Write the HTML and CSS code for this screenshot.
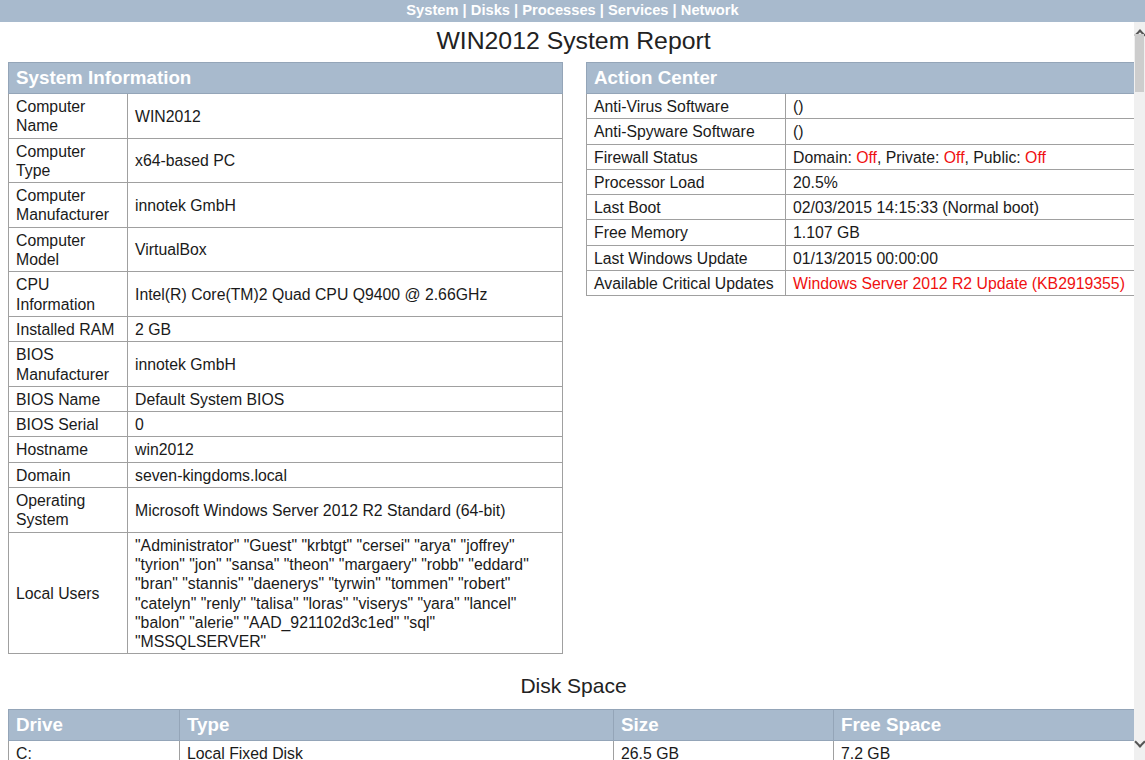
FILE: index.html
```html
<!DOCTYPE html>
<html>
<head>
<meta charset="utf-8">
<title>WIN2012 System Report</title>
<link rel="stylesheet" href="styles.css">
</head>
<body>
<nav class="topnav">
  <a href="#">System</a> | <a href="#">Disks</a> | <a href="#">Processes</a> | <a href="#">Services</a> | <a href="#">Network</a>
</nav>
<main class="page">
  <h1 class="title">WIN2012 System Report</h1>
  <div class="columns">
    <table class="grid sysinfo">
      <thead><tr><th colspan="2">System Information</th></tr></thead>
      <tbody>
        <tr><td class="label">Computer Name</td><td>WIN2012</td></tr>
        <tr><td class="label">Computer Type</td><td>x64-based PC</td></tr>
        <tr><td class="label">Computer Manufacturer</td><td>innotek GmbH</td></tr>
        <tr><td class="label">Computer Model</td><td>VirtualBox</td></tr>
        <tr><td class="label">CPU Information</td><td>Intel(R) Core(TM)2 Quad CPU Q9400 @ 2.66GHz</td></tr>
        <tr><td class="label">Installed RAM</td><td>2 GB</td></tr>
        <tr><td class="label">BIOS Manufacturer</td><td>innotek GmbH</td></tr>
        <tr><td class="label">BIOS Name</td><td>Default System BIOS</td></tr>
        <tr><td class="label">BIOS Serial</td><td>0</td></tr>
        <tr><td class="label">Hostname</td><td>win2012</td></tr>
        <tr><td class="label">Domain</td><td>seven-kingdoms.local</td></tr>
        <tr><td class="label">Operating System</td><td>Microsoft Windows Server 2012 R2 Standard (64-bit)</td></tr>
        <tr><td class="label">Local Users</td><td>"Administrator" "Guest" "krbtgt" "cersei" "arya" "joffrey" "tyrion" "jon" "sansa" "theon" "margaery" "robb" "eddard" "bran" "stannis" "daenerys" "tyrwin" "tommen" "robert" "catelyn" "renly" "talisa" "loras" "viserys" "yara" "lancel" "balon" "alerie" "AAD_921102d3c1ed" "sql" "MSSQLSERVER"</td></tr>
      </tbody>
    </table>
    <table class="grid action">
      <thead><tr><th colspan="2">Action Center</th></tr></thead>
      <tbody>
        <tr><td class="label">Anti-Virus Software</td><td>()</td></tr>
        <tr><td class="label">Anti-Spyware Software</td><td>()</td></tr>
        <tr><td class="label">Firewall Status</td><td>Domain: <span class="bad">Off</span>, Private: <span class="bad">Off</span>, Public: <span class="bad">Off</span></td></tr>
        <tr><td class="label">Processor Load</td><td>20.5%</td></tr>
        <tr><td class="label">Last Boot</td><td>02/03/2015 14:15:33 (Normal boot)</td></tr>
        <tr><td class="label">Free Memory</td><td>1.107 GB</td></tr>
        <tr><td class="label">Last Windows Update</td><td>01/13/2015 00:00:00</td></tr>
        <tr><td class="label">Available Critical Updates</td><td><span class="bad">Windows Server 2012 R2 Update (KB2919355)</span></td></tr>
      </tbody>
    </table>
  </div>
  <h2 class="section-title">Disk Space</h2>
  <table class="grid disk">
    <thead><tr><th class="c-drive">Drive</th><th class="c-type">Type</th><th class="c-size">Size</th><th>Free Space</th></tr></thead>
    <tbody>
      <tr><td>C:</td><td>Local Fixed Disk</td><td>26.5 GB</td><td>7.2 GB</td></tr>
    </tbody>
  </table>
</main>
<div class="scrollbar">
  <span class="sb-up"></span>
  <span class="sb-thumb"></span>
  <span class="sb-down"></span>
</div>
</body>
</html>
```

FILE: styles.css
```css
html, body {
  margin: 0;
  padding: 0;
  background: #fff;
  overflow: hidden;
}
body {
  font-family: "Liberation Sans", Arial, sans-serif;
  color: #1a1a1a;
  font-size: 15.8px;
}
.topnav {
  height: 22px;
  line-height: 21px;
  background: #a8bacd;
  color: #fff;
  text-align: center;
  font-weight: bold;
  font-size: 14.7px;
}
.topnav a {
  color: #fff;
  text-decoration: none;
}
.page {
  padding: 0 6px 0 8px;
}
.title {
  margin: 2px 0 4px;
  font-weight: normal;
  font-size: 24.8px;
  line-height: 34px;
  text-align: center;
  color: #222;
}
.columns {
  display: grid;
  grid-template-columns: 555px 553px;
  column-gap: 23px;
  align-items: start;
}
.grid {
  border-collapse: collapse;
  width: 100%;
}
.grid th {
  background: #a8bacd;
  color: #fff;
  text-align: left;
  font-weight: bold;
  font-size: 18.8px;
  height: 30px;
  padding: 0 7px;
  border: 1px solid #94a5b8;
}
.grid td {
  border: 1px solid #a0a0a0;
  padding: 3px 7px 2px;
  line-height: 19.3px;
  vertical-align: middle;
}
.sysinfo .label {
  width: 104px;
}
.action .label {
  width: 184px;
}
.bad {
  color: #f01010;
}
.section-title {
  margin: 19px 0 10px;
  font-weight: normal;
  font-size: 21px;
  line-height: 26px;
  text-align: center;
  color: #222;
}
.disk .c-drive { width: 156px; }
.disk .c-type { width: 419px; }
.disk .c-size { width: 205px; }
.scrollbar {
  position: absolute;
  top: 22px;
  right: 0;
  width: 11px;
  bottom: 0;
  background: #f0f0f0;
}
.sb-up, .sb-down {
  position: absolute;
  left: 2px;
  width: 6px;
  height: 6px;
  border-left: 2px solid #555;
  border-top: 2px solid #555;
}
.sb-up {
  top: 9px;
  transform: rotate(45deg);
}
.sb-down {
  bottom: 14px;
  transform: rotate(225deg);
}
.sb-thumb {
  position: absolute;
  top: 12px;
  left: 1px;
  right: 1px;
  height: 58px;
  background: #cdcdcd;
}
```
